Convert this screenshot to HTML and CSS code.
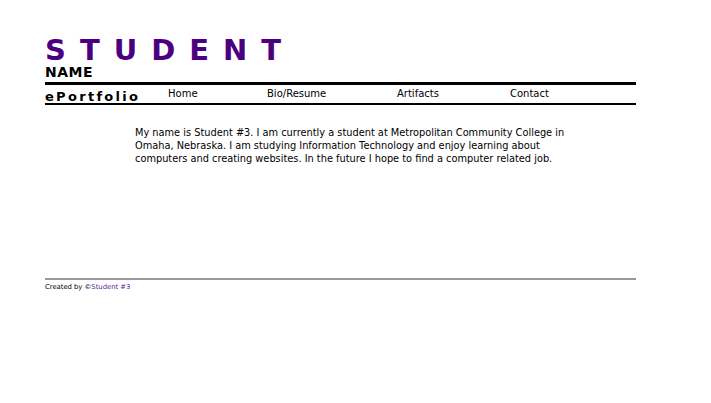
FILE: index.html
```html
<!DOCTYPE html>
<html>
<head>
<meta charset="utf-8">
<title>Student ePortfolio</title>
<link rel="stylesheet" href="styles.css">
</head>
<body>
<div class="page">
  <header class="masthead">
    <h1 class="title">STUDENT</h1>
    <div class="subtitle">NAME</div>
  </header>
  <nav class="navbar">
    <div class="brand">ePortfolio</div>
    <a class="navlink" href="#">Home</a>
    <a class="navlink" href="#">Bio/Resume</a>
    <a class="navlink" href="#">Artifacts</a>
    <a class="navlink" href="#">Contact</a>
  </nav>
  <main class="content">
    <p class="intro">My name is Student #3. I am currently a student at Metropolitan Community College in Omaha, Nebraska. I am studying Information Technology and enjoy learning about computers and creating websites. In the future I hope to find a computer related job.</p>
  </main>
  <footer class="footer">Created by ©<a class="footlink" href="#">Student #3</a></footer>
</div>
</body>
</html>
```
FILE: styles.css
```css
html, body {
  margin: 0;
  padding: 0;
  background: #fff;
}
.page {
  width: 591px;
  margin-left: 45px;
  padding-top: 36px;
  font-family: "DejaVu Sans", Verdana, sans-serif;
}
.masthead {
  display: flex;
  flex-direction: column;
}
.title {
  margin: 0;
  font-size: 29px;
  line-height: 28px;
  font-weight: bold;
  color: #4b0082;
  letter-spacing: 14px;
}
.subtitle {
  font-size: 14px;
  line-height: 14px;
  font-weight: bold;
  color: #000;
  letter-spacing: 0.5px;
  margin-top: 1px;
}
.navbar {
  margin-top: 3px;
  border-top: 3px solid #000;
  border-bottom: 2px solid #000;
  display: grid;
  grid-template-columns: 123px 99px 130px 113px 1fr;
  align-items: start;
  height: 18px;
}
.brand {
  font-size: 13px;
  line-height: 15px;
  font-weight: bold;
  letter-spacing: 2.3px;
  color: #000;
  padding-top: 3.5px;
}
.navlink {
  font-size: 10px;
  line-height: 12px;
  color: #000;
  text-decoration: none;
  padding-top: 3px;
}
.content {
  height: 175px;
  padding-left: 90px;
  padding-top: 21px;
  box-sizing: border-box;
  border-bottom: 2px solid #999;
}
.intro {
  margin: 0;
  width: 440px;
  font-size: 9.8px;
  line-height: 13px;
  color: #000;
}
.footer {
  font-size: 6.8px;
  padding-top: 3px;
  color: #000;
}
.footlink {
  color: #5b2a9a;
  text-decoration: none;
}
```
